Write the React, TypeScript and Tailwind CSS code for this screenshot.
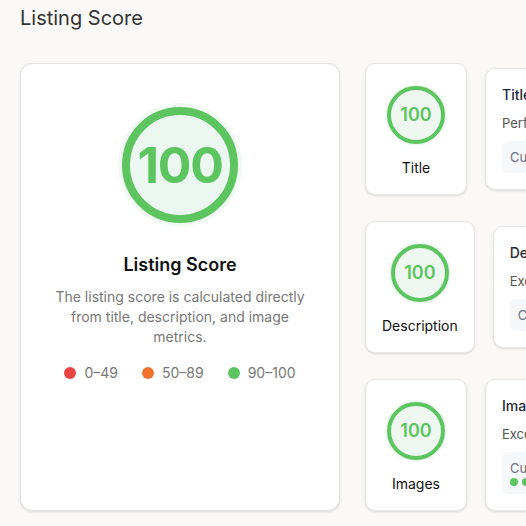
import React from 'react'

const font = { fontFamily: 'Inter, "Noto Sans", sans-serif' }

interface Metric {
  label: string
  score: number
  heading: string
  note: string
  current: string
  dots?: number
}

const metrics: Metric[] = [
  { label: 'Title', score: 100, heading: 'Title', note: 'Perfect length and keyword coverage', current: 'Current: 62 characters' },
  { label: 'Description', score: 100, heading: 'Description', note: 'Excellent detail and structure', current: 'Current: 1,240 characters' },
  { label: 'Images', score: 100, heading: 'Images', note: 'Excellent image coverage', current: 'Current: 8 images', dots: 8 },
]

function SmallScore({ score }: { score: number }) {
  return (
    <div className="flex h-[62px] w-[62px] items-center justify-center rounded-full bg-[#f1f9f3]">
      <div className="flex h-[58px] w-[58px] items-center justify-center rounded-full border-[4px] border-[#5cc560] bg-[#eef8f1]">
        <span className="text-lg font-semibold text-[#5cc560]">{score}</span>
      </div>
    </div>
  )
}

function MetricRow({ m }: { m: Metric }) {
  return (
    <div className="flex items-center gap-[18px]">
      <div className="flex min-w-[102px] shrink-0 flex-col items-center rounded-[10px] border border-[#e6e6e6] bg-white px-4 pt-5 pb-4 shadow-sm">
        <SmallScore score={m.score} />
        <p className="mt-3 text-sm leading-5 font-normal text-[#111]">{m.label}</p>
      </div>
      <div className="w-[280px] shrink-0 rounded-[10px] border border-[#e6e6e6] bg-white p-4 shadow-sm">
        <p className="text-sm leading-5 font-medium text-[#1f2937]">{m.heading}</p>
        <p className="mt-2 text-[13px] leading-5 text-[#555]">{m.note}</p>
        <div className="mt-2 rounded-md bg-[#f6f7f9] px-2 py-1.5">
          <p className="text-[13px] leading-5 text-[#6b7280]">{m.current}</p>
          {m.dots && (
            <div className="mb-0.5 flex gap-1">
              {Array.from({ length: m.dots }).map((_, i) => (
                <span key={i} className="h-2 w-2 rounded-full bg-[#5cc560]" />
              ))}
            </div>
          )}
        </div>
      </div>
    </div>
  )
}

export default function App() {
  return (
    <div className="h-[526px] w-full overflow-hidden bg-[#faf9f7] px-5 pt-1" style={font}>
      <h1 className="text-xl leading-7 text-[#333]">Listing Score</h1>

      <div className="mt-[31px] flex items-stretch gap-[25px]">
        <div className="flex w-[320px] shrink-0 flex-col items-center rounded-xl border border-[#e2e2e2] bg-white px-8 pt-[39px] shadow-sm">
          <div className="flex h-[124px] w-[124px] items-center justify-center rounded-full bg-[#f1f9f3]">
            <div className="flex h-[116px] w-[116px] items-center justify-center rounded-full border-[8px] border-[#5cc560] bg-[#edf7f1]">
              <span className="text-[50px] leading-none font-bold tracking-tight text-[#5cc560]">100</span>
            </div>
          </div>
          <h2 className="mt-6 text-lg leading-7 font-semibold text-[#111]">Listing Score</h2>
          <p className="mt-2 text-center text-sm leading-5 text-[#777]">
            The listing score is calculated directly from title, description, and image metrics.
          </p>
          <div className="mt-4 flex items-center gap-6 text-sm leading-5 text-[#777]">
            <div className="flex items-center gap-2">
              <span className="h-3 w-3 rounded-full bg-[#e84444]" />
              <span>0–49</span>
            </div>
            <div className="flex items-center gap-2">
              <span className="h-3 w-3 rounded-full bg-[#f07430]" />
              <span>50–89</span>
            </div>
            <div className="flex items-center gap-2">
              <span className="h-3 w-3 rounded-full bg-[#5cc560]" />
              <span>90–100</span>
            </div>
          </div>
        </div>

        <div className="flex shrink-0 flex-col gap-[26px]">
          {metrics.map(m => (
            <MetricRow key={m.label} m={m} />
          ))}
        </div>
      </div>
    </div>
  )
}
